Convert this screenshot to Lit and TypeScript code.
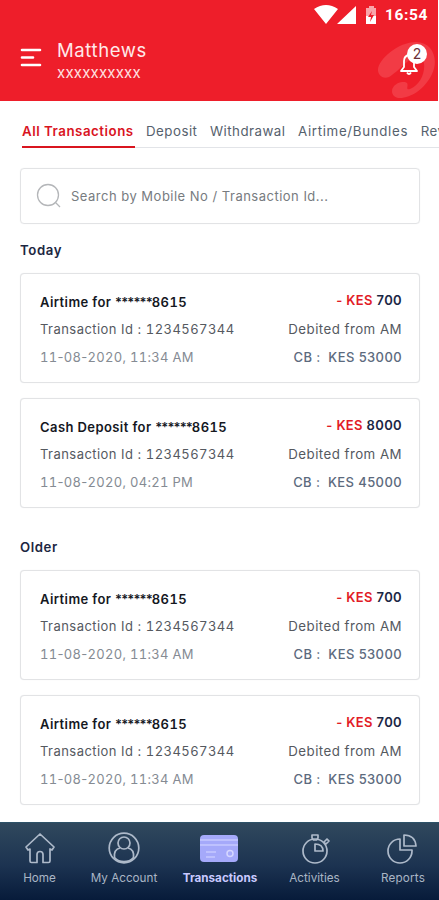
import { LitElement, html, css, svg } from "lit";
import { customElement, property } from "lit/decorators.js";

interface Txn { title: string; amount: string; date: string; balance: string; }

const today: Txn[] = [
  { title: "Airtime for ", amount: "700", date: "11-08-2020, 11:34 AM", balance: "53000" },
  { title: "Cash Deposit for ", amount: "8000", date: "11-08-2020, 04:21 PM", balance: "45000" },
];
const older: Txn[] = [
  { title: "Airtime for ", amount: "700", date: "11-08-2020, 11:34 AM", balance: "53000" },
  { title: "Airtime for ", amount: "700", date: "11-08-2020, 11:34 AM", balance: "53000" },
];

@customElement("txn-card")
class TxnCard extends LitElement {
  @property({ attribute: false }) txn!: Txn;

  static styles = css`
    :host { display: block; box-sizing: border-box; height: 110px; border: 1px solid #e2e3e5; border-radius: 4px; box-shadow: 0 0 1px #e6e7e9; padding: 12px 17px 0 19px; background: #fff; }
    .row { display: flex; justify-content: space-between; height: 28px; line-height: 28px; font-size: 13px; white-space: pre; color: #55595f; }
    .top { height: 29px; }
    .title { font-weight: 600; color: #15181f; letter-spacing: 0.42px; padding-top: 3px; line-height: 27px; }
    .stars { letter-spacing: -0.9px; }
    .num { font-variant-numeric: tabular-nums; }
    .amount { font-weight: 600; color: #1b2745; letter-spacing: 0.35px; }
    .minus { color: #e21b26; }
    .id { letter-spacing: 0.45px; }
    .from { font-size: 13.3px; letter-spacing: 0.46px; }
    .date { color: #858b93; letter-spacing: 0.3px; }
    .balance { font-weight: 500; color: #5c6a7d; letter-spacing: 0.4px; }
  `;

  render() {
    const t = this.txn;
    const date = t.date.split("-").map((part, i) => html`${i ? "-" : ""}<span class="num">${part}</span>`);
    return html`
      <div class="row top"><span class="title">${t.title}<span class="stars">******</span><span class="num">8615</span></span><span class="amount"><span class="minus">- KES</span> ${t.amount}</span></div>
      <div class="row"><span class="id">Transaction Id : <span class="num">1234567344</span></span><span class="from">Debited from AM</span></div>
      <div class="row"><span class="date">${date}</span><span class="balance">CB :  KES ${t.balance}</span></div>
    `;
  }
}

const icons = {
  home: svg`<path d="M3 16 17 3l14 13-2 3-2-1v12q0 1.500-1.500 1.500H20v-8q0-3-3-3t-3 3v8H8.500Q7 31.500 7 30V18l-2 1z"/>`,
  account: svg`<circle cx="17" cy="17" r="14.8"/><circle cx="17" cy="12" r="6"/><path d="M13 17C8.500 18 7 22 7.500 26.500c5 5.500 14 5.500 19 0C27 22 25.500 18 21 17"/>`,
  activities: svg`<circle cx="17" cy="20" r="12"/><path d="M14 4h6v3l-1.500 2h-3L14 7zM26 11l3-3 2 2-3 3zM17 13v7h8q0-7-8-7z"/>`,
  reports: svg`<path d="M14 8A12 12 0 1 0 26 20v-1H14z"/><path d="M18 4v11h12Q29 4 18 4z"/>`,
};

@customElement("app-root")
class AppRoot extends LitElement {
  static styles = css`
    :host { display: flex; flex-direction: column; width: 439px; height: 900px; overflow: hidden; background: #fff; font-family: Inter, "Noto Sans", sans-serif; }
    .header { position: relative; width: 438px; height: 101px; background: #ee1e2a; color: #fff; }
    .swoosh { position: absolute; right: 0; top: 40px; }
    .status { position: relative; display: flex; justify-content: flex-end; align-items: center; height: 30px; padding-right: 10px; font: 700 15.5px Roboto, sans-serif; letter-spacing: 0.6px; }
    .status-icons { margin-right: 7px; }
    .profile { position: relative; display: flex; padding-left: 20px; }
    .menu { margin-top: 16px; }
    .who { margin-left: 15px; padding-top: 8px; flex: 1; }
    .name { font-size: 18.5px; line-height: 24px; letter-spacing: 0.6px; color: #ffe9e9; }
    .number { font-size: 15px; line-height: 21px; letter-spacing: 0.2px; color: #ffe3e3; }
    .bell { margin: 12px 8px 0 0; }
    .tabs { display: flex; gap: 12.5px; margin: 15px 0 0 22px; height: 31px; border-bottom: 1px solid #e2e4e8; font-size: 13.3px; letter-spacing: 0.48px; line-height: 31px; color: #56616d; white-space: nowrap; }
    .tab { height: 31px; flex: none; }
    .active { box-sizing: border-box; height: 32px; width: 113px; margin-right: -1.5px; color: #d9151f; font-weight: 600; letter-spacing: 0.52px; border-bottom: 2px solid #d9151f; }
    .bundles { letter-spacing: 0.68px; }
    .search { display: flex; align-items: center; box-sizing: border-box; width: 400px; height: 56px; margin: 20px 0 0 20px; padding-left: 15px; border: 1px solid #e2e3e5; border-radius: 4px; box-shadow: 0 0 1px #e6e7e9; font-size: 13px; letter-spacing: 0.49px; color: #777b80; }
    .search-icon { margin-right: 9px; }
    .section { margin: 0 19px 0 20px; display: flex; flex-direction: column; gap: 15px; }
    .label { height: 20px; line-height: 20px; font-size: 13.2px; font-weight: 600; color: #1c2742; letter-spacing: 0.6px; }
    .first { margin-top: 16px; }
    .second { margin-top: 29px; }
    .heading { height: 18px; }
    .nav { display: flex; box-sizing: border-box; height: 78px; margin-top: auto; border-top: 1px solid #2e5268; background: linear-gradient(#30485d, #1c3351 55%, #071b3a); }
    .item { display: flex; flex: none; flex-direction: column; align-items: center; font-size: 11.7px; line-height: 16px; color: #aab6c5; white-space: nowrap; }
    .item svg { margin: 8px 0 5px; }
    .home { width: 79px; }
    .account { width: 90px; }
    .transactions { width: 102px; color: #c8c9ff; font-weight: 700; }
    .activities { width: 87px; }
    .reports { width: 90px; letter-spacing: 0.2px; }
  `;

  item(cls: "home" | "account" | "activities" | "reports", label: string) {
    return html`<div class="item ${cls}"><svg width="34" height="34" viewBox="0 0 34 34" fill="none" stroke="#aebaca" stroke-width="1.7" stroke-linejoin="round">${icons[cls]}</svg><span>${label}</span></div>`;
  }

  render() {
    return html`
      <div class="header">
        <svg class="swoosh" width="62" height="60" viewBox="0 0 62 60"><path fill="#f23b45" d="M2 31C1 20 22 2 40 2 57 2 63 20 56 34 49 49 34 59 22 58 13 56 14 44 26 42 37 41 27 51 34 49 45 45 52 28 46 17 40 9 24 31 13 37 7 39 3 36 2 31z"/></svg>
        <div class="status">
          <svg class="status-icons" width="64" height="20" viewBox="0 0 64 20" fill="#fff"><path d="M0 4Q12-4 24 4L12 19zM42 1v18H23z"/><path fill="#f9a5aa" d="M53 3h2V1h5v2h2v8H52V3z"/><path d="M52 11h10v8H52z"/><path fill="#ee1e2a" d="m58 6-4 6h3l-1 5 4-7h-3z"/></svg>16:54
        </div>
        <div class="profile">
          <svg class="menu" width="22" height="24" viewBox="0 0 22 24" stroke="#fff" stroke-width="2.6" stroke-linecap="round"><path d="M2 4h18M2 11.500h11M2 19h18"/></svg>
          <div class="who"><div class="name">Matthews</div><div class="number">xxxxxxxxxx</div></div>
          <svg class="bell" width="30" height="36" viewBox="0 0 30 36"><path d="M1 29h16l-3-4v-6q0-5-5-6-5 1-5 6v6zM7 30.500q2 3 4 0" fill="none" stroke="#fff" stroke-width="1.8" stroke-linejoin="round"/><circle cx="17" cy="12" r="10" fill="#fff"/><text x="17" y="17" text-anchor="middle" font-size="14" fill="#6d3038">2</text></svg>
        </div>
      </div>
      <div class="tabs"><span class="tab active">All Transactions</span><span class="tab">Deposit</span><span class="tab">Withdrawal</span><span class="tab bundles">Airtime/Bundles</span><span class="tab">Reversal</span></div>
      <div class="search"><svg class="search-icon" width="26" height="26" viewBox="0 0 26 26" fill="none" stroke="#b4b6b9" stroke-width="1.3"><circle cx="12" cy="12" r="10.5"/><path d="m19 19 5 5"/></svg>Search by Mobile No / Transaction Id...</div>
      <div class="section first"><div class="label heading">Today</div>${today.map((t) => html`<txn-card .txn=${t}></txn-card>`)}</div>
      <div class="section second"><div class="label heading">Older</div>${older.map((t) => html`<txn-card .txn=${t}></txn-card>`)}</div>
      <div class="nav">
        ${this.item("home", "Home")}${this.item("account", "My Account")}
        <div class="item transactions"><svg width="42" height="34" viewBox="0 0 42 34"><rect x="1" y="4" width="38" height="27" rx="4" fill="#a5a9fa"/><path d="M1 9h38M1 14h38M7 21h10M7 26h9" stroke="#c6c9ff" stroke-width="1.4"/><circle cx="31" cy="22.5" r="3" fill="none" stroke="#d5d6ff" stroke-width="1.5"/></svg><span>Transactions</span></div>
        ${this.item("activities", "Activities")}${this.item("reports", "Reports")}
      </div>
    `;
  }
}
